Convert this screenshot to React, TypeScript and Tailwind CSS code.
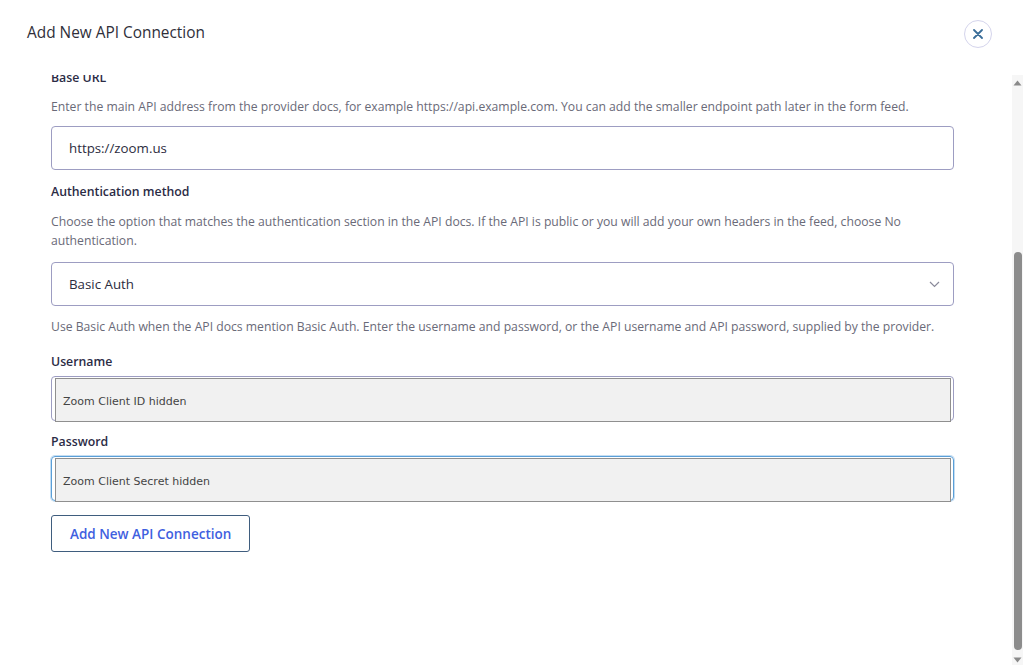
import React from "react";

const font = { fontFamily: '"Open Sans", "Noto Sans", sans-serif' };

function Label({ children }: { children: React.ReactNode }) {
  return <div className="text-[12.3px] font-semibold text-[#2b2b45] leading-[18px]">{children}</div>;
}

function Help({ children }: { children: React.ReactNode }) {
  return <p className="text-[12.2px] text-[#6a6a78] leading-[19px]">{children}</p>;
}

function HiddenInput({ text, focus }: { text: string; focus?: boolean }) {
  return (
    <div
      className={`rounded-[4px] border pt-[1px] pl-[3px] pr-[2px] h-[45px] ${
        focus ? "border-[#5a9fd8] shadow-[0_0_0_1px_rgba(90,159,216,0.35)]" : "border-[#9d9dc2]"
      }`}
    >
      <div
        className="h-[44px] bg-[#f1f1f1] border border-[#8f8f8f] flex items-center pl-[7px] pt-[4px] text-[11px] text-[#444]"
        style={{ fontFamily: '"DejaVu Sans", Verdana, sans-serif' }}
      >
        {text}
      </div>
    </div>
  );
}

export default function App() {
  return (
    <div className="w-[1023px] h-[665px] bg-white flex flex-col overflow-hidden" style={font}>
      <div className="h-[75px] flex items-start justify-between pl-[27px] pr-[31px] shrink-0">
        <h1 className="text-[15.4px] leading-[20px] text-[#2f2f3a] mt-[23px]">Add New API Connection</h1>
        <button className="mt-[20px] w-[28px] h-[28px] rounded-full border border-[#d4d4ec] flex items-center justify-center">
          <svg width="10" height="10" viewBox="0 0 10 10">
            <path d="M1 1 L9 9 M9 1 L1 9" stroke="#3a6d98" strokeWidth="1.8" strokeLinecap="round" />
          </svg>
        </button>
      </div>
      <div className="flex flex-1 min-h-0">
        <div className="flex-1 overflow-hidden">
          <div className="pl-[51px] pr-[58px] mt-[-6px] flex flex-col">
            <Label>Base URL</Label>
            <div className="mt-[10px]">
              <Help>Enter the main API address from the provider docs, for example https://api.example.com. You can add the smaller endpoint path later in the form feed.</Help>
            </div>
            <div className="mt-[10px] h-[44px] rounded-[4px] border border-[#9d9dc2] flex items-center pl-[17px] pt-[1px] text-[13.3px] text-[#2c2c3e]">
              https://zoom.us
            </div>
            <div className="mt-[13px]">
              <Label>Authentication method</Label>
            </div>
            <div className="mt-[11px]">
              <Help>
                Choose the option that matches the authentication section in the API docs. If the API is public or you will add your own headers in the feed, choose No authentication.
              </Help>
            </div>
            <div className="mt-[12px] h-[44px] rounded-[4px] border border-[#9d9dc2] flex items-center justify-between pl-[17px] pr-[13px] pt-[1px] text-[13.3px] text-[#2c2c3e]">
              <span>Basic Auth</span>
              <svg width="11" height="7" viewBox="0 0 11 7">
                <path d="M1 1 L5.5 5.5 L10 1" stroke="#8a8a9a" strokeWidth="1.2" fill="none" />
              </svg>
            </div>
            <div className="mt-[11px]">
              <Help>Use Basic Auth when the API docs mention Basic Auth. Enter the username and password, or the API username and API password, supplied by the provider.</Help>
            </div>
            <div className="mt-[17px]">
              <Label>Username</Label>
            </div>
            <div className="mt-[5px]">
              <HiddenInput text="Zoom Client ID hidden" />
            </div>
            <div className="mt-[12px]">
              <Label>Password</Label>
            </div>
            <div className="mt-[5px]">
              <HiddenInput text="Zoom Client Secret hidden" focus />
            </div>
            <div className="mt-[14px]">
              <button className="h-[37px] px-[18px] pt-[1px] rounded-[3px] border border-[#3f5d7e] text-[13.5px] font-semibold text-[#3f5fe0]">
                Add New API Connection
              </button>
            </div>
          </div>
        </div>
        <div className="w-[11px] bg-[#f6f6f6] flex flex-col items-center shrink-0">
          <div className="h-[14px] flex items-center justify-center pt-[2px]">
            <svg width="9" height="6" viewBox="0 0 9 6"><path d="M0.5 5.5 L4.5 0.5 L8.5 5.5 Z" fill="#8a8a8a" /></svg>
          </div>
          <div className="h-[163px]" />
          <div className="w-[8px] h-[398px] rounded-[4px] bg-[#8c8c8c]" />
          <div className="flex-1 flex items-end pb-[2px]">
            <svg width="9" height="6" viewBox="0 0 9 6"><path d="M0.5 0.5 L4.5 5.5 L8.5 0.5 Z" fill="#8a8a8a" /></svg>
          </div>
        </div>
      </div>
    </div>
  );
}
